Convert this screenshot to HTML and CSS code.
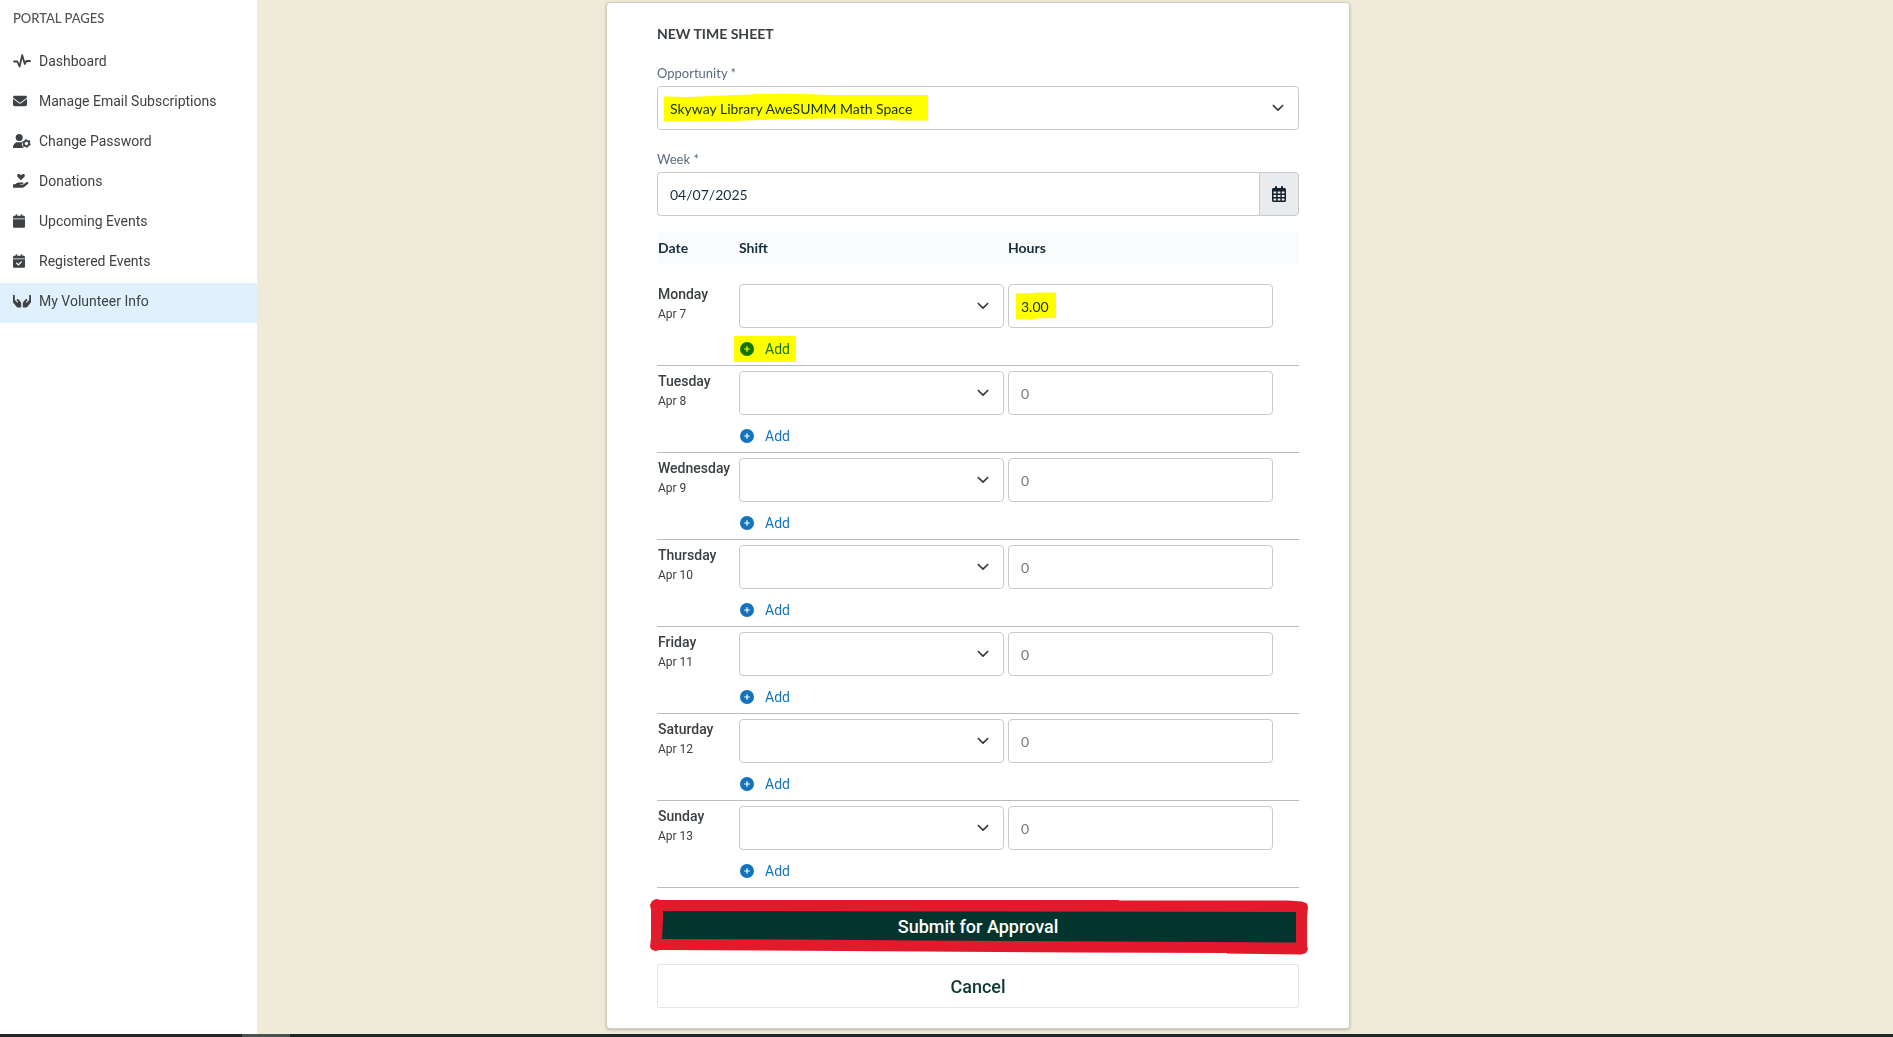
FILE: index.html
```html
<!DOCTYPE html>
<html lang="en">
<head>
    <meta charset="UTF-8">
    <meta name="viewport" content="width=device-width, initial-scale=1.0">
    <title>New Time Sheet</title>
    <link rel="stylesheet" href="styles.css">
</head>
<body>
    <!-- Icon sprite -->
    <svg class="sprite" aria-hidden="true">
        <symbol id="i-pulse" viewBox="0 0 18 14">
            <path d="M1 7.5h3.4L6.6 12.5 9.2 1.2l2.6 8.8 1.6-3H17" fill="none" stroke="currentColor" stroke-width="1.8" stroke-linecap="round" stroke-linejoin="round"/>
        </symbol>
        <symbol id="i-mail" viewBox="0 0 512 512">
            <path d="M48 64C21.5 64 0 85.5 0 112c0 15.1 7.1 29.3 19.2 38.4L236.8 313.6c11.4 8.5 27 8.5 38.4 0L492.8 150.4c12.1-9.1 19.2-23.3 19.2-38.4c0-26.5-21.5-48-48-48H48zM0 176V384c0 35.3 28.7 64 64 64H448c35.3 0 64-28.7 64-64V176L294.4 339.2c-22.8 17.1-54 17.1-76.8 0L0 176z"/>
        </symbol>
        <symbol id="i-user" viewBox="0 0 18 14">
            <circle cx="6.2" cy="3.5" r="3.5"/>
            <path d="M0 13.2C0 10.3 2.2 8.2 5 8.2h2.6c.6 0 1 .1 1.5.3-.6 2 0 4.2 1.5 5.5H.8c-.5 0-.8-.3-.8-.8z"/>
            <circle cx="13.4" cy="9.5" r="2.6" fill="none" stroke="currentColor" stroke-width="1.7"/>
            <circle cx="13.4" cy="9.5" r="3.7" fill="none" stroke="currentColor" stroke-width="1.3" stroke-dasharray="1.94 1.94"/>
        </symbol>
        <symbol id="i-donate" viewBox="0 0 16 14">
            <path d="M8 6.2 4.7 3C3.9 2.1 4 .9 4.8.3c.9-.6 2-.3 2.6.4l.6.6.6-.6c.6-.7 1.7-1 2.6-.4.8.6.9 1.8.1 2.7z"/>
            <path d="M.5 10.3h1.6l1.3-1c.7-.6 1.5-.8 2.4-.8h3.6c1.3 0 1.3 1.8 0 1.8H7.1v.5h2.8l3.6-2.5c1.3-.8 2.6.8 1.4 1.8l-3.7 2.9c-.6.5-1.3.8-2.1.8H.5c-.3 0-.5-.2-.5-.5v-2.5c0-.3.2-.5.5-.5z"/>
        </symbol>
        <symbol id="i-calendar" viewBox="0 0 448 512">
            <path d="M96 32V64H48C21.5 64 0 85.5 0 112v48H448V112c0-26.5-21.5-48-48-48H352V32c0-17.7-14.3-32-32-32s-32 14.3-32 32V64H160V32c0-17.7-14.3-32-32-32S96 14.3 96 32zM448 192H0V464c0 26.5 21.5 48 48 48H400c26.5 0 48-21.5 48-48V192z"/>
        </symbol>
        <symbol id="i-calendar-check" viewBox="0 0 448 512">
            <path fill-rule="evenodd" d="M96 32V64H48C21.5 64 0 85.5 0 112v48H448V112c0-26.5-21.5-48-48-48H352V32c0-17.7-14.3-32-32-32s-32 14.3-32 32V64H160V32c0-17.7-14.3-32-32-32S96 14.3 96 32zM448 192H0V464c0 26.5 21.5 48 48 48H400c26.5 0 48-21.5 48-48V192zM329 305c9.4-9.4 9.4-24.6 0-33.9s-24.6-9.4-33.9 0l-95 95-47-47c-9.4-9.4-24.6-9.4-33.9 0s-9.4 24.6 0 33.9l64 64c9.4 9.4 24.6 9.4 33.9 0L329 305z"/>
        </symbol>
        <symbol id="i-hands" viewBox="0 0 18 14">
            <path id="hand" d="M0 1.6C0 .5 1.8.5 1.8 1.6v4.3l2.5 2.7c.4.4 1-.1.7-.6L3.8 6.4c-.7-1 .7-2 1.5-1.2L7.4 7.6c.5.6.8 1.3.8 2.1v3.1c0 .5-.3.7-.7.7H4.8c-.4 0-.8-.2-1-.5L.7 9.3C.2 8.7 0 8.1 0 7.4z"/>
            <use href="#hand" transform="matrix(-1 0 0 1 18 0)"/>
        </symbol>
        <symbol id="i-calendar-days" viewBox="0 0 14 16">
            <path fill-rule="evenodd" d="M3 1a1 1 0 0 1 2 0v1h4V1a1 1 0 0 1 2 0v1h1.5c.8 0 1.5.7 1.5 1.5v11c0 .8-.7 1.5-1.5 1.5h-11C.7 16 0 15.3 0 14.5v-11C0 2.7.7 2 1.5 2H3zM1.5 5.5v2h2.7v-2zm4.2 0v2h2.7v-2zm4.1 0v2h2.7v-2zM1.5 9v2h2.7V9zm4.2 0v2h2.7V9zm4.1 0v2h2.7V9zM1.5 12.5v2h2.7v-2zm4.2 0v2h2.7v-2zm4.1 0v2h2.7v-2z"/>
        </symbol>
        <symbol id="i-plus" viewBox="0 0 14 14">
            <path fill-rule="evenodd" d="M7 0a7 7 0 1 1 0 14A7 7 0 0 1 7 0zM6.4 4.2v2.2H4.2v1.2h2.2v2.2h1.2V7.6h2.2V6.4H7.6V4.2z"/>
        </symbol>
        <symbol id="i-chevron" viewBox="0 0 12 8">
            <path d="M1.3 1.5 6 6.2l4.7-4.7" fill="none" stroke="currentColor" stroke-width="1.7" stroke-linecap="round" stroke-linejoin="round"/>
        </symbol>
    </svg>

    <div class="layout">
        <nav class="sidebar">
            <h2 class="sidebar-title">PORTAL PAGES</h2>
            <ul class="menu">
                <li><a class="menu-link" href="#"><span class="menu-icon"><svg class="icon-wide"><use href="#i-pulse"/></svg></span>Dashboard</a></li>
                <li><a class="menu-link" href="#"><span class="menu-icon"><svg class="icon"><use href="#i-mail"/></svg></span>Manage Email Subscriptions</a></li>
                <li><a class="menu-link" href="#"><span class="menu-icon"><svg class="icon-wide"><use href="#i-user"/></svg></span>Change Password</a></li>
                <li><a class="menu-link" href="#"><span class="menu-icon"><svg class="icon-mid"><use href="#i-donate"/></svg></span>Donations</a></li>
                <li><a class="menu-link" href="#"><span class="menu-icon"><svg class="icon-cal"><use href="#i-calendar"/></svg></span>Upcoming Events</a></li>
                <li><a class="menu-link" href="#"><span class="menu-icon"><svg class="icon-cal"><use href="#i-calendar-check"/></svg></span>Registered Events</a></li>
                <li><a class="menu-link active" href="#"><span class="menu-icon"><svg class="icon-wide"><use href="#i-hands"/></svg></span>My Volunteer Info</a></li>
            </ul>
        </nav>

        <main class="content">
            <form class="card">
                <h1 class="card-title">NEW TIME SHEET</h1>

                <div class="form-group">
                    <label class="form-label" for="opportunity">Opportunity *</label>
                    <div class="select-wrap">
                        <select class="field" id="opportunity">
                            <option>Skyway Library AweSUMM Math Space</option>
                        </select>
                        <svg class="chevron"><use href="#i-chevron"/></svg>
                        <svg class="marker marker-opportunity" viewBox="0 0 264 29"><path d="M0 3.5 24 4 84 1.5 120 .5 170 2 264 2v25.5h-26L180 25.5 120 26 70 28 0 28.5z"/></svg>
                    </div>
                </div>

                <div class="form-group">
                    <label class="form-label" for="week">Week *</label>
                    <div class="input-group">
                        <input class="field" id="week" type="text" value="04/07/2025">
                        <button class="calendar-btn" type="button" aria-label="Choose date"><svg><use href="#i-calendar-days"/></svg></button>
                    </div>
                </div>

                <table class="timesheet">
                    <thead>
                        <tr>
                            <th class="col-date">Date</th>
                            <th class="col-field">Shift</th>
                            <th class="col-field">Hours</th>
                            <th></th>
                        </tr>
                    </thead>
                    <tbody>
                        <tr>
                            <td><div class="day">Monday</div><div class="date">Apr 7</div></td>
                            <td>
                                <div class="select-wrap">
                                    <select class="field" aria-label="Monday shift"><option></option></select>
                                    <svg class="chevron"><use href="#i-chevron"/></svg>
                                </div>
                                <button class="add-btn" type="button"><svg><use href="#i-plus"/></svg>Add<span class="marker marker-add"></span></button>
                            </td>
                            <td>
                                <div class="select-wrap">
                                    <input class="field" type="text" value="3.00" placeholder="0" aria-label="Monday hours">
                                    <svg class="marker marker-hours" viewBox="0 0 40 28"><path d="M0 1.5 20 1V.5h20V26L20 26.5V27.5H0z"/></svg>
                                </div>
                            </td>
                            <td></td>
                        </tr>
                        <tr>
                            <td><div class="day">Tuesday</div><div class="date">Apr 8</div></td>
                            <td>
                                <div class="select-wrap">
                                    <select class="field" aria-label="Tuesday shift"><option></option></select>
                                    <svg class="chevron"><use href="#i-chevron"/></svg>
                                </div>
                                <button class="add-btn" type="button"><svg><use href="#i-plus"/></svg>Add</button>
                            </td>
                            <td><input class="field" type="text" placeholder="0" aria-label="Tuesday hours"></td>
                            <td></td>
                        </tr>
                        <tr>
                            <td><div class="day">Wednesday</div><div class="date">Apr 9</div></td>
                            <td>
                                <div class="select-wrap">
                                    <select class="field" aria-label="Wednesday shift"><option></option></select>
                                    <svg class="chevron"><use href="#i-chevron"/></svg>
                                </div>
                                <button class="add-btn" type="button"><svg><use href="#i-plus"/></svg>Add</button>
                            </td>
                            <td><input class="field" type="text" placeholder="0" aria-label="Wednesday hours"></td>
                            <td></td>
                        </tr>
                        <tr>
                            <td><div class="day">Thursday</div><div class="date">Apr 10</div></td>
                            <td>
                                <div class="select-wrap">
                                    <select class="field" aria-label="Thursday shift"><option></option></select>
                                    <svg class="chevron"><use href="#i-chevron"/></svg>
                                </div>
                                <button class="add-btn" type="button"><svg><use href="#i-plus"/></svg>Add</button>
                            </td>
                            <td><input class="field" type="text" placeholder="0" aria-label="Thursday hours"></td>
                            <td></td>
                        </tr>
                        <tr>
                            <td><div class="day">Friday</div><div class="date">Apr 11</div></td>
                            <td>
                                <div class="select-wrap">
                                    <select class="field" aria-label="Friday shift"><option></option></select>
                                    <svg class="chevron"><use href="#i-chevron"/></svg>
                                </div>
                                <button class="add-btn" type="button"><svg><use href="#i-plus"/></svg>Add</button>
                            </td>
                            <td><input class="field" type="text" placeholder="0" aria-label="Friday hours"></td>
                            <td></td>
                        </tr>
                        <tr>
                            <td><div class="day">Saturday</div><div class="date">Apr 12</div></td>
                            <td>
                                <div class="select-wrap">
                                    <select class="field" aria-label="Saturday shift"><option></option></select>
                                    <svg class="chevron"><use href="#i-chevron"/></svg>
                                </div>
                                <button class="add-btn" type="button"><svg><use href="#i-plus"/></svg>Add</button>
                            </td>
                            <td><input class="field" type="text" placeholder="0" aria-label="Saturday hours"></td>
                            <td></td>
                        </tr>
                        <tr>
                            <td><div class="day">Sunday</div><div class="date">Apr 13</div></td>
                            <td>
                                <div class="select-wrap">
                                    <select class="field" aria-label="Sunday shift"><option></option></select>
                                    <svg class="chevron"><use href="#i-chevron"/></svg>
                                </div>
                                <button class="add-btn" type="button"><svg><use href="#i-plus"/></svg>Add</button>
                            </td>
                            <td><input class="field" type="text" placeholder="0" aria-label="Sunday hours"></td>
                            <td></td>
                        </tr>
                    </tbody>
                </table>

                <div class="actions">
                    <div class="submit-wrap">
                        <button class="btn btn-primary" type="submit">Submit for Approval</button>
                        <!-- hand-drawn frame round the submit button -->
                        <svg class="frame" viewBox="0 0 662 60" preserveAspectRatio="none">
                            <path fill-rule="evenodd" d="M3 9 5 5 9 3 14 4H472V4.5H640L655 5.5 660 7.5 661 11.5 660 21V50L661 53 659 57 654 58.5 580 57.5V57L428 56.5 274 55.5 120 54.5 12 54 9 55 5 54 3 51 4 42V14zM16 15V23L15 43 153 43.5 277 44.5 468 45.5 649 46.5V16z"/>
                        </svg>
                    </div>
                    <button class="btn btn-cancel" type="button">Cancel</button>
                </div>
            </form>
        </main>
    </div>
    <div class="bottom-bar"><div class="bottom-thumb"></div></div>
</body>
</html>
```

FILE: styles.css
```css
* {
    margin: 0;
    padding: 0;
    box-sizing: border-box;
}

body {
    font-family: Roboto, 'Liberation Sans', sans-serif;
    font-size: 14px;
    color: #3c4043;
    background: #f0ead8;
    min-height: 100vh;
    display: flex;
    flex-direction: column;
}

svg {
    display: block;
    fill: currentColor;
}

.sprite {
    position: absolute;
    width: 0;
    height: 0;
}

.layout {
    flex: 1;
    display: flex;
}

/* Sidebar */
.sidebar {
    width: 257px;
    flex-shrink: 0;
    background: #fff;
}

.sidebar-title {
    font-family: Lato, sans-serif;
    font-size: 13px;
    font-weight: 500;
    line-height: 20px;
    color: #505356;
    padding: 8px 13px 15px;
}

.menu {
    list-style: none;
}

.menu-link {
    display: flex;
    align-items: center;
    height: 40px;
    padding: 0 13px 4px;
    color: #3f4245;
    text-decoration: none;
}

.menu-link.active {
    background: #e0f1fd;
}

.menu-icon {
    width: 26px;
}

.icon {
    width: 14px;
    height: 14px;
}

.icon-mid {
    width: 16px;
    height: 14px;
}

.icon-wide {
    width: 18px;
    height: 14px;
}

.icon-cal {
    width: 12px;
    height: 14px;
}

/* Card */
.content {
    flex: 1;
    display: grid;
    grid-template-columns: 349fr 744fr 543fr;
    align-items: start;
    padding: 2px 0 5px;
}

.card {
    grid-column: 2;
    background: #fff;
    border: 1px solid #cfcfc2;
    border-radius: 4px;
    box-shadow: 0 1px 3px rgba(0, 40, 30, 0.25);
    padding: 21px 50px 20px;
}

.card-title {
    font-family: Lato, sans-serif;
    font-size: 14px;
    font-weight: 700;
    line-height: 20px;
    margin-bottom: 19px;
}

.form-group {
    margin-bottom: 19px;
}

.form-label {
    display: block;
    font-family: Lato, sans-serif;
    font-size: 13px;
    line-height: 20px;
    color: #5b6b7d;
    margin-bottom: 3px;
}

.field {
    display: block;
    width: 100%;
    height: 44px;
    padding: 0 12px;
    font-family: Lato, sans-serif;
    font-size: 14px;
    color: #14303c;
    background: #fff;
    border: 1px solid #c8cbcd;
    border-radius: 4px;
    appearance: none;
}

.field::placeholder {
    color: #75797c;
    opacity: 1;
}

.select-wrap {
    position: relative;
}

.chevron {
    position: absolute;
    top: 18px;
    right: 15px;
    width: 12px;
    height: 8px;
    color: #343a40;
    pointer-events: none;
}

.input-group {
    display: flex;
    margin-bottom: -3px;
}

.input-group .field {
    flex: 1;
    border-right: 0;
    border-radius: 4px 0 0 4px;
}

.calendar-btn {
    width: 40px;
    display: flex;
    align-items: center;
    justify-content: center;
    color: #14202b;
    background: #e9ebee;
    border: 1px solid #c8cbcd;
    border-radius: 0 4px 4px 0;
}

.calendar-btn svg {
    width: 14px;
    height: 16px;
}

/* Time sheet table */
.timesheet {
    width: 100%;
    table-layout: fixed;
    border-collapse: separate;
    border-spacing: 0;
}

.timesheet th {
    height: 32px;
    padding: 0 2px 1px;
    font-family: Lato, sans-serif;
    font-size: 14px;
    font-weight: 700;
    text-align: left;
    color: #14303c;
    background: #fafbfd;
}

.timesheet .col-date {
    width: 80px;
}

.timesheet .col-field {
    width: 269px;
}

.timesheet tbody::before {
    content: '';
    display: block;
    height: 15px;
}

.timesheet td {
    padding: 5px 2px 0;
    vertical-align: top;
    border-bottom: 1px solid #babbbd;
}

.timesheet th:first-child,
.timesheet td:first-child {
    padding-left: 1px;
}

.day {
    font-weight: 500;
    line-height: 20px;
}

.date {
    font-size: 12px;
    line-height: 20px;
}

.add-btn {
    position: relative;
    display: flex;
    align-items: center;
    gap: 11px;
    margin-top: 5px;
    padding: 0 1px;
    height: 32px;
    font-family: inherit;
    font-size: 14px;
    color: #1374bd;
    background: none;
    border: 0;
}

.add-btn svg {
    width: 14px;
    height: 14px;
}

/* Yellow highlighter */
.marker {
    position: absolute;
    fill: #ff0;
    mix-blend-mode: multiply;
    pointer-events: none;
}

.marker-opportunity {
    top: 7px;
    left: 7px;
    width: 264px;
    height: 29px;
}

.marker-hours {
    top: 8px;
    left: 8px;
    width: 40px;
    height: 28px;
}

.marker-add {
    inset: 3px -5px;
    background: #ff0;
}

/* Actions */
.actions {
    display: flex;
    flex-direction: column;
    gap: 16px;
    margin-top: 16px;
}

.submit-wrap {
    position: relative;
}

.frame {
    position: absolute;
    top: -8px;
    left: -10px;
    width: calc(100% + 20px);
    height: 60px;
    fill: #e3192c;
    pointer-events: none;
}

.btn {
    display: block;
    width: 100%;
    height: 44px;
    font-family: inherit;
    font-size: 18px;
    font-weight: 500;
    border-radius: 2px;
}

.btn-primary {
    color: #fff;
    background: #03352e;
    border: 0;
}

.btn-cancel {
    color: #0b3830;
    background: #fff;
    border: 1px solid #e4e6e7;
}

/* Bottom bar */
.bottom-bar {
    height: 3px;
    background: #20262a;
}

.bottom-thumb {
    width: 48px;
    height: 3px;
    margin-left: 242px;
    background: #4a5252;
}
```
